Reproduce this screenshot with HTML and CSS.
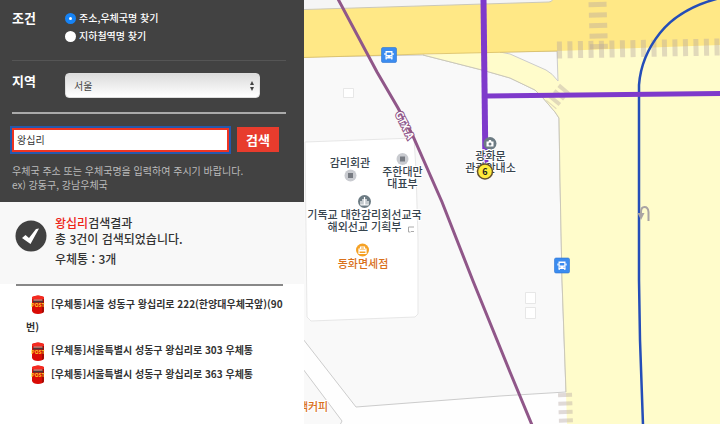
FILE: index.html
```html
<!DOCTYPE html>
<html lang="ko">
<head>
    <meta charset="UTF-8">
    <meta name="viewport" content="width=device-width, initial-scale=1.0">
    <title>우체통 찾기</title>
    <link rel="stylesheet" href="styles.css">
</head>
<body>
    <div class="finder">
        <form class="search">
            <fieldset class="row types">
                <legend>조건</legend>
                <div class="radios">
                    <label><input type="radio" name="type" value="addr" checked>주소,우체국명 찾기</label>
                    <label><input type="radio" name="type" value="subway">지하철역명 찾기</label>
                </div>
            </fieldset>
            <div class="row region">
                <label for="region">지역</label>
                <div class="select-box">
                    <select id="region">
                        <option>서울</option>
                    </select>
                    <svg class="arrows" width="4" height="10" viewBox="0 0 4 10"><path d="M0 4 2 0l2 4zM0 6h4L2 10z" fill="#444"/></svg>
                </div>
            </div>
            <div class="keyword">
                <input type="text" id="keyword" value="왕십리" aria-label="검색어">
                <button type="button">검색</button>
            </div>
            <p class="help">우체국 주소 또는 우체국명을 입력하여 주시기 바랍니다.<br>ex) 강동구, 강남우체국</p>
        </form>

        <div class="summary">
            <svg class="check" width="32" height="32" viewBox="0 0 32 32">
                <circle cx="16" cy="16" r="15.500" fill="#414141"/>
                <path d="M7 18 10.500 15l3.500 3L21 9l3-.5L15.500 24z" fill="#fff"/>
            </svg>
            <div class="summary-text">
                <p><em>왕십리</em>검색결과<br>총 3건이 검색되었습니다.</p>
                <p>우체통 : 3개</p>
            </div>
        </div>

        <ul class="results">
            <li><svg class="post" viewBox="0 0 14 20"><use href="#postbox"/></svg>[우체통]서울 성동구 왕십리로 222(한양대우체국앞)(90번)</li>
            <li><svg class="post" viewBox="0 0 14 20"><use href="#postbox"/></svg>[우체통]서울특별시 성동구 왕십리로 303 우체통</li>
            <li><svg class="post" viewBox="0 0 14 20"><use href="#postbox"/></svg>[우체통]서울특별시 성동구 왕십리로 363 우체통</li>
        </ul>
    </div>

    <svg class="map" viewBox="304 0 416 424" preserveAspectRatio="xMinYMin slice">
        <defs>
            <g id="postbox">
                <path d="M1 2Q7-1 13 2V16Q12 19 7 19T1 16Z" fill="#d90b05"/>
                <path d="M1 2Q7-1 13 2V4H1Z" fill="#f52a20"/>
                <path d="M11 4h2v12q0 2-2 2z" fill="#a50a04"/>
                <path d="M2 5.500h10v2H2z" fill="#4b3938"/>
                <path d="M2.500 5h9" stroke="#c9b6b0"/>
                <text class="post-text" x="7" y="12">POST</text>
            </g>
            <g id="bus">
                <rect x="-7.500" y="-7.500" width="15" height="15" rx="1.500" fill="#3b8cf0" stroke="#2b74d2" stroke-width=".6"/>
                <path d="M-3.500-4h7v7.500h-7z" fill="#fff"/>
                <path d="M-2.300-2.500h4.600v2.500h-4.600z" fill="#3b8cf0"/>
                <path d="M-4-2v2M4-2v2M-2.800 3v1.500M2.800 3v1.500" stroke="#fff" stroke-width="1.200"/>
                <path d="M-2.500 1.700h1M1.500 1.700h1" stroke="#3b8cf0"/>
            </g>
        </defs>

        <!-- 블록 -->
        <rect x="304" width="416" height="424" fill="#fefefe"/>
        <path d="M304 0H553L549 2 304 9Z" fill="#f5f5f5"/>
        <path class="block" d="M303 57 423 55 482 70 510 78 535 90 543 98 555 112 559 118 560 180 562 280 566 392 500 396 356 407 303 339Z"/>
        <path class="block" d="M303 369 342 421 340 425H303Z"/>
        <path class="building" d="M305 142 414 138 416 170 418 240V314L415 317 311 321 307 317Z"/>
        <path class="building" d="M343.500 88.500h10v9h-10zM525.500 292.500h10v11h-10zM525.500 307.500h10v11h-10z"/>

        <!-- 도로 -->
        <path d="M423 55 500 51 720 44V424H567L566 392 562 280 560 180 559 118 555 112 543 98 535 90 510 78 482 70Z" fill="#fffccb"/>
        <path d="M423 55 482 70 510 78 535 90 543 98 555 112 559 118 560 180 562 280 566 392" class="edge"/>
        <path d="M500 52 557 51 558 81Q552 73 546 70L510 54Z" class="block"/>
        <path d="M304 9.500 549 2Q552 2 553-1H720V45L557 51 425 54 304 57.500Z" fill="#ffe886"/>
        <path d="M304 9.500 549 2Q552 2 553-1" class="edge"/>
        <path d="M304 57.500 425 54 557 51" fill="none" stroke="#d8bd61" stroke-width=".8"/>
        <!-- 횡단보도 -->
        <path class="crossing" stroke-width="17" stroke-dasharray="5 5.500" d="M557 50 720 47"/>
        <path class="crossing" stroke-width="18" stroke-dasharray="5 5.500" d="M597.500 2 599 51"/>
        <path class="crossing" stroke-width="13" stroke-dasharray="4 3" d="M565 88 551 105"/>
        <path class="crossing" stroke-width="14" stroke-dasharray="4 4.500" d="M565 393 566 424"/>

        <!-- 노선 -->
        <path d="M720-2Q680 8 660 33 641 57 639 85V280L640 340 643 425" fill="none" stroke="#244db8" stroke-width="2.500"/>
        <path d="M483.500 0 485.500 170" stroke="#7e3acb" stroke-width="6"/>
        <path d="M487 96 720 93.500" stroke="#7e3acb" stroke-width="5"/>
        <path d="M338-1 377 72 398 108 412 134 442 202 473 281 510 372 532 425" fill="none" stroke="#905789" stroke-width="3"/>
        <text class="gtx" transform="translate(405 125) rotate(64)" y="4">GTX-A</text>

        <!-- 유턴 -->
        <path d="M648.500 221V212Q648 207 644.500 207T641 212V215" fill="none" stroke="#aaa4a3" stroke-width="2"/>
        <path d="M637.500 213h7l-3.500 7z" fill="#aaa4a3"/>

        <use href="#bus" x="389" y="55"/>
        <use href="#bus" x="562" y="265.500"/>

        <!-- 장소 -->
        <g fill="#c9cbd0">
            <circle cx="350.500" cy="175.500" r="6"/>
            <circle cx="402.500" cy="159" r="6"/>
            <path d="M348 173h5v5h-5zM400 156.500h5v5h-5z" fill="#777b82"/>
        </g>
        <circle cx="364.500" cy="201.500" r="6.500" fill="#6c7b83"/>
        <path d="M361 205v-4M363 205v-6M366 205v-6M368 205v-4M364.500 205v-8" stroke="#fff" stroke-width="1.200"/>
        <path d="M360.500 205h8" stroke="#fff"/>
        <circle cx="362.500" cy="250" r="6.500" fill="#f5a124"/>
        <path d="M359 249h7v4.500h-7zM360.500 249v-2h4v2" fill="none" stroke="#fff" stroke-width="1.200"/>
        <path d="M359 250h7v1.500h-7z" fill="#fff"/>
        <circle cx="490" cy="143.500" r="6.500" fill="#6c7b83"/>
        <path d="M486.500 141.500h2l.5-1.500h2l.5 1.500h2v5h-7z" fill="#fff"/>
        <circle cx="490" cy="144" r="1.500" fill="#6c7b83"/>
        <path d="M414 227h-5.500v5h2M411 231.500h3" fill="none" stroke="#aaa"/>

        <g class="place">
            <text x="350" y="167">감리회관</text>
            <text x="402.500" y="176">주한대만</text>
            <text x="402.500" y="188">대표부</text>
            <text x="364.500" y="219">기독교 대한감리회선교국</text>
            <text x="364.500" y="231">해외선교 기획부</text>
            <text x="490.500" y="160">광화문</text>
            <text x="490.500" y="172">관광안내소</text>
            <text class="shop" x="363" y="268">동화면세점</text>
            <text class="shop" x="313" y="411">빽커피</text>
        </g>

        <circle cx="485" cy="171.500" r="7.500" fill="#ffeb3b" stroke="#65512c" stroke-width="1.500"/>
        <text class="pin" x="485" y="175">6</text>
    </svg>
</body>
</html>
```
FILE: styles.css
```css
* {
    box-sizing: border-box;
}
body {
    display: flex;
    min-height: 100vh;
    margin: 0;
    background-color: #fff;
    color: #333;
    font-family: "Noto Sans CJK KR", sans-serif;
    font-size: 10px;
}
p, ul, fieldset, legend {
    margin: 0;
    padding: 0;
    border: 0;
}
input, select, button {
    font-family: inherit;
}

/* 검색 영역 */
.finder {
    flex: 0 0 304px;
}
.search {
    padding: 8px 18px 10px 12px;
    background-color: #424242;
    color: #fff;
}
.row {
    display: flex;
    align-items: flex-start;
}
.types {
    height: 53px;
    border-bottom: 1px solid #555;
}
.row legend, .row > label {
    float: left;
    width: 53px;
    font-size: 13px;
    font-weight: bold;
    line-height: 20px;
}
.region > label {
    margin-top: -2px;
}
.radios {
    padding-top: 1px;
}
.radios label {
    display: flex;
    align-items: center;
    gap: 3px;
    line-height: 18px;
    font-weight: 500;
}
.radios input {
    appearance: none;
    width: 11px;
    height: 11px;
    margin: 0;
    border-radius: 50%;
    background-color: #fff;
}
.radios input:checked {
    border: 4px solid #1683f5;
}
.region {
    padding: 12px 0 14px;
    border-bottom: 2px solid #aaa;
}
.select-box {
    position: relative;
    flex: 0 0 195px;
}
.select-box select {
    display: block;
    appearance: none;
    width: 100%;
    height: 25px;
    padding: 0 8px;
    border: 1px solid #ddd;
    border-radius: 4px;
    background: linear-gradient(#dcdcdc, #fff);
    color: #444;
    font-size: 10px;
}
.arrows {
    position: absolute;
    top: 8px;
    right: 6px;
}
.keyword {
    display: flex;
    align-items: center;
    gap: 8px;
    margin-top: 13px;
}
.keyword input {
    width: 217px;
    height: 24px;
    padding: 0 3px;
    border: 2px solid #ee3423;
    outline: 2px solid #2559ad;
    color: #333;
    font-size: 10px;
}
.keyword button {
    width: 42px;
    height: 25px;
    padding: 0;
    border: 0;
    background-color: #e83c2d;
    color: #fff;
    font-size: 13px;
    font-weight: bold;
}
.help {
    margin-top: 12px;
    color: #bbb;
    line-height: 14px;
}

/* 검색 결과 */
.summary {
    display: flex;
    gap: 8px;
    padding: 13px 0 17px 15px;
    background-color: #f8f8f8;
    font-size: 12px;
    font-weight: 500;
    line-height: 16px;
}
.summary .check {
    margin-top: 5px;
}
.summary em {
    color: #ed2518;
    font-style: normal;
}
.summary p + p {
    margin-top: 4px;
}
.results {
    margin: 0 21px 0 16px;
    padding: 6px 0 0 10px;
    border-top: 2px solid #888;
    list-style: none;
    font-weight: bold;
    line-height: 23px;
}
.results li {
    text-indent: 5px;
}
.post {
    width: 14px;
    height: 20px;
    margin-right: 6px;
    vertical-align: middle;
}
.post-text {
    fill: #ffc928;
    font-size: 5px;
    font-weight: bold;
    text-anchor: middle;
    text-indent: 0;
}

/* 지도 */
.map {
    display: block;
    flex: 1;
    min-width: 0;
    height: 100vh;
}
.block {
    fill: #f9f9f9;
    stroke: #ccc;
}
.building {
    fill: #fff;
    stroke: #e7e7e7;
}
.edge {
    fill: none;
    stroke: #cbc8b8;
}
.crossing {
    fill: none;
    stroke: #b5a5a0;
    stroke-opacity: .4;
}
.place text {
    fill: #37444d;
    stroke: #fff;
    stroke-width: 2px;
    paint-order: stroke;
    font-size: 11px;
    font-weight: 500;
    text-anchor: middle;
}
.place .shop {
    fill: #d9701a;
}
.gtx {
    fill: #fff;
    stroke: #905789;
    stroke-width: 2px;
    paint-order: stroke;
    font-size: 10px;
    font-weight: bold;
    text-anchor: middle;
}
.pin {
    fill: #222;
    font-size: 9px;
    font-weight: bold;
    text-anchor: middle;
}
```
